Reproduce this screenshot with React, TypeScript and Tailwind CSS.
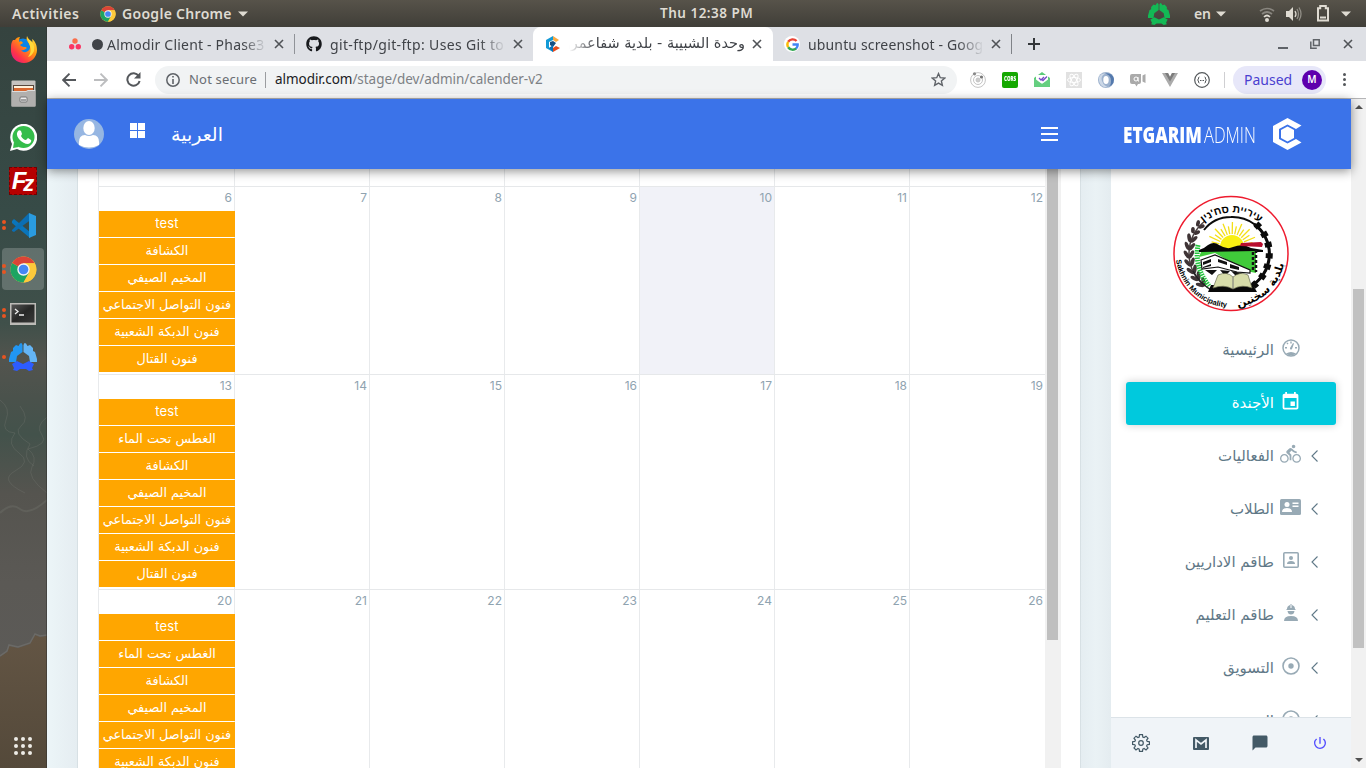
import React from "react";
import { FaGithub } from "react-icons/fa";
import { MdEvent, MdDirectionsBike, MdPowerSettingsNew, MdChatBubble } from "react-icons/md";

const ui = "font-['Noto_Sans','Open_Sans',sans-serif]";
const ar = "font-['DejaVu_Sans',sans-serif]";

const shared = ["الكشافة", "المخيم الصيفي", "فنون التواصل الاجتماعي", "فنون الدبكة الشعبية", "فنون القتال"];
const diving = "الغطس تحت الماء";
const weeks = [
  { days: [6, 7, 8, 9, 10, 11, 12], events: ["test", ...shared], height: "h-[188px]" },
  { days: [13, 14, 15, 16, 17, 18, 19], events: ["test", diving, ...shared], height: "h-[215px]" },
  { days: [20, 21, 22, 23, 24, 25, 26], events: ["test", diving, ...shared], height: "h-[215px]" },
];

function ChromeLogo({ size }: { size: number }) {
  return (
    <svg width={size} height={size} viewBox="0 0 48 48">
      <circle cx="24" cy="24" r="23" fill="#fdc93b" />
      <path d="M24 24 4 12.5A23 23 0 0 0 24 47L34 30z" fill="#1da462" />
      <path d="M24 24 4 12.5A23 23 0 0 1 44 13H24z" fill="#db4437" />
      <path d="M24 13h20a23 23 0 0 1-20 34l10-18z" fill="#fdc93b" />
      <circle cx="24" cy="24" r="11" fill="#f4f4f4" />
      <circle cx="24" cy="24" r="8.6" fill="#4587f3" />
    </svg>
  );
}

function TriRing({ size, colors }: { size: number; colors: string[] }) {
  return (
    <svg width={size} height={size} viewBox="0 0 28 28">
      <path d="M12.500 0L11 .5 9.500 3 7 2 4 5l0 3-2 1-2 7 0 3h7l1-6 5.500-4V2z" fill={colors[0]} />
      <path d="M15.500 0L17 .5 18.500 3 21 2l3 3v3l2 1 2 7v3h-7l-1-6-5.500-4V2z" fill={colors[1]} />
      <path d="M3 21l5-3 6 3 6-3 5 3-2 4 1 2-4 1-3-2h-6l-3 2-4-1 1-2z" fill={colors[2]} />
    </svg>
  );
}

function TopBar() {
  return (
    <div className={`relative flex h-[27px] w-full items-center bg-linear-to-b from-[#57534a] to-[#403e38] text-[14px] font-semibold text-[#dfdbd2] ${ui}`}>
      <span className="ml-3 w-[88px] whitespace-nowrap text-[14px] tracking-[0.5px]">Activities</span>
      <ChromeLogo size={16} />
      <span className="ml-[6px] w-[116px] whitespace-nowrap tracking-[0.3px]">Google Chrome</span>
      <Caret />
      <span className="absolute left-[660px] whitespace-nowrap text-[13.5px] tracking-[0.5px]">Thu 12:38 PM</span>
      <div className="ml-auto flex h-full items-center">
        <TriRing size={22} colors={["#13b955", "#13b955", "#13b955"]} />
        <span className="ml-6 mr-[5px]">en</span>
        <Caret />
        <svg className="ml-[33px]" width="16" height="16" viewBox="0 0 16 16" fill="none" strokeWidth="1.7">
          <path d="M1 5q7-5 14 0M3 8q5-4 10 0" stroke="#89867f" />
          <path d="M5 11q3-3 6 0" stroke="#dfdbd2" />
          <circle cx="8" cy="14" r="2" fill="#dfdbd2" />
        </svg>
        <svg className="ml-[10px]" width="18" height="16" viewBox="0 0 18 16" fill="none">
          <path d="M1 5h3l4-4v14l-4-4H1z" fill="#dfdbd2" />
          <path d="M10 5q2 3 0 6" stroke="#dfdbd2" strokeWidth="1.3" />
          <path d="M12 3q3 5 0 10M14 1.500q4 6.500 0 13" stroke="#918e86" strokeWidth="1.3" />
        </svg>
        <svg className="ml-[13px]" width="14" height="17" viewBox="0 0 14 17">
          <path d="M2 3.200h2.200V1h5.600v2.200H12V15.500H2z" fill="none" stroke="#dfdbd2" strokeWidth="2" />
          <path d="M4 11.500h6v2H4z" fill="#dfdbd2" />
        </svg>
        <span className="ml-[11px] mr-[15px] flex"><Caret /></span>
      </div>
    </div>
  );
}

function Caret() {
  return (
    <svg width="10" height="6" viewBox="0 0 10 6">
      <path d="M0 .5h10L5 5.500z" fill="#dfdbd2" />
    </svg>
  );
}

function Dots({ n }: { n: number }) {
  return (
    <span className="absolute left-[2px] top-1/2 flex -translate-y-1/2 flex-col gap-[2px]">
      {Array.from({ length: n }, (_, i) => <i key={i} className="size-1 rounded-full bg-[#e95420]" />)}
    </span>
  );
}

function DockItem({ children, dots = 0, active = false }: { children: React.ReactNode; dots?: number; active?: boolean }) {
  return (
    <div className="relative flex h-[44px] w-[46px] items-center justify-center">
      {active && <span className="absolute left-[2px] top-[1px] h-[42px] w-[42px] rounded-[4px] bg-white/20" />}
      {dots > 0 && <Dots n={dots} />}
      <span className="relative flex">{children}</span>
    </div>
  );
}

function Dock() {
  return (
    <div className="relative flex w-[47px] shrink-0 flex-col overflow-hidden bg-[#34433f]">
      <svg className="absolute inset-0" width="47" height="741" viewBox="0 0 47 741">
        <defs>
          <linearGradient id="sea" x1="0" y1="0" x2="0" y2="1">
            <stop offset="0" stopColor="#35433f" />
            <stop offset=".25" stopColor="#374b47" />
            <stop offset=".4" stopColor="#40504a" />
            <stop offset=".45" stopColor="#53544e" />
            <stop offset=".5" stopColor="#4a524c" />
            <stop offset=".55" stopColor="#43524b" />
            <stop offset=".63" stopColor="#55544f" />
            <stop offset=".75" stopColor="#5b5955" />
            <stop offset="1" stopColor="#5d5c5a" />
          </linearGradient>
          <linearGradient id="sand" x1="0" y1="0" x2="0" y2="1">
            <stop offset="0" stopColor="#635544" />
            <stop offset="1" stopColor="#54493a" />
          </linearGradient>
        </defs>
        <rect width="47" height="741" fill="url(#sea)" />
        <g fill="none" stroke="#777a73" strokeOpacity=".3">
          <path d="M0 373q11 8 6 20t9 13q-9 11 4 20t-4 18 10 22M47 390q-12 9-5 18t-14 14q10 8 4 18t15 26M20 379q10 13 1 20t9 18q-9 14 4 22" />
          <path d="M0 486q11-11 20-4t27-9" strokeWidth="2" />
        </g>
        <path d="M0 630l7-5 2-6 9 2 12-4 5-9 5 2 7-1v132H0z" fill="url(#sand)" />
        <path d="M0 629l7-5 2-6 9 2 12-4 5-9 5 2 7-1" fill="none" stroke="#6b6a67" strokeWidth="1.5" />
        <path d="M46.500 0v741" stroke="#2f302d" strokeOpacity=".5" />
      </svg>
      <DockItem>
        <svg width="27" height="27" viewBox="0 0 27 27">
          <defs>
            <linearGradient id="fox" x1="1" y1="0" x2=".1" y2="1">
              <stop offset="0" stopColor="#fff44f" /><stop offset=".4" stopColor="#ff980e" /><stop offset=".75" stopColor="#ff3647" /><stop offset="1" stopColor="#e31587" />
            </linearGradient>
          </defs>
          <circle cx="13" cy="12" r="9.500" fill="#0a84e8" />
          <path d="M1 12C0 22 7 27 14 27s13-6 13-13c0-5-2-9-5-11 1 3 0 4-1 4-1-2-3-5-4-7-2 6 4 7 3 12-1 4-6 6-9 2 3 1 4-1 6-2-2-2-4 0-7-3l3-2c-1-2-3-2-4-1 0-2 0-3 1-5-2 0-4 1-5 3L3 4C1 7 1 9 1 12z" fill="url(#fox)" />
          <path d="M17 2q9 5 7 13-2 5-6 6 4-5 2-11z" fill="#ffd83a" />
        </svg>
      </DockItem>
      <DockItem>
        <svg width="25" height="27" viewBox="0 0 25 27">
          <rect x=".5" y=".5" width="24" height="26" rx="1" fill="#c6c3c0" />
          <path d="M2 5h21v8H2z" fill="#57483d" /><path d="M3 6h19v2H3z" fill="#fff1db" /><path d="M3 8h19v4H3z" fill="#d8672f" />
          <path d="M.5 11h15l2-1h7v16.500H.5z" fill="#b1b0ae" /><path d="M1 11.500h14l2-1h7" stroke="#ddd" fill="none" />
          <rect x="9" y="17" width="7" height="5" rx="1" fill="#eee" stroke="#777" /><path d="M10 20h5" stroke="#555" />
        </svg>
      </DockItem>
      <DockItem>
        <svg width="27" height="27" viewBox="0 0 27 27">
          <path d="M0 27l2-7a13.500 13.500 0 1 1 5 5z" fill="#fff" /><circle cx="13.500" cy="13" r="11" fill="#35bd4b" />
          <path d="M3 24l1-6 5 5z" fill="#35bd4b" />
          <path d="M8 7c1-1 2-1 3 0l1 3-1 2c1 2 3 4 5 4l2-2 3 2c1 1-1 4-3 4-6 0-12-7-11-11z" fill="#fff" />
        </svg>
      </DockItem>
      <DockItem>
        <span className="relative flex size-[28px] items-center justify-center border border-dashed border-[#720000] bg-[#b60000] font-['Liberation_Sans',sans-serif] text-[24px] font-bold italic tracking-[-3px] text-white">
          <span className="-ml-[3px]">F</span><span className="mt-[5px] text-[22px]">z</span>
        </span>
      </DockItem>
      <DockItem dots={2}>
        <svg width="25" height="25" viewBox="0 0 25 25">
          <path d="M1 8l2-2 16 13v6L1 10z" fill="#0a75bb" /><path d="M1 17l17-17 3 6L3 19l-2-1z" fill="#0b6eb3" />
          <path d="M18 0l7 3v19l-7 3z" fill="#2a9bdf" />
        </svg>
      </DockItem>
      <DockItem dots={2} active><ChromeLogo size={27} /></DockItem>
      <DockItem dots={2}>
        <svg className="mt-[2px]" width="26" height="22" viewBox="0 0 26 22">
          <defs><linearGradient id="term" x1="0" y1="0" x2="1" y2="1"><stop stopColor="#555" /><stop offset=".5" stopColor="#272827" /><stop offset="1" stopColor="#383938" /></linearGradient></defs>
          <rect width="26" height="22" fill="#bcbbb7" /><rect x="1.500" y="1.500" width="23" height="18" fill="url(#term)" />
          <path d="M5 6l3 2.500L5 11M9 12h5" stroke="#eee" strokeWidth="1.300" fill="none" />
        </svg>
      </DockItem>
      <DockItem dots={1}><TriRing size={28} colors={["#2196f3", "#64b5f6", "#2d5cff"]} /></DockItem>
      <div className="relative mx-auto mt-auto mb-[13px] mr-[15px] grid grid-cols-3 gap-[3px]">
        {Array.from({ length: 9 }, (_, i) => <i key={i} className="size-1 rounded-full bg-[#eeece7]" />)}
      </div>
    </div>
  );
}

function Close({ className = "" }: { className?: string }) {
  return (
    <svg className={`shrink-0 ${className}`} width="10" height="10" viewBox="0 0 10 10">
      <path d="M1 1l8 8M9 1L1 9" stroke="#505357" strokeWidth="1.600" />
    </svg>
  );
}

function GoogleG() {
  return (
    <span className="flex size-4 shrink-0 items-center justify-center rounded-full bg-white">
      <svg width="13" height="13" viewBox="0 0 24 24" fill="none" strokeWidth="4.500">
        <path d="M19.500 5.500A10 10 0 0 0 4 7" stroke="#ea4335" /><path d="M4 7a10 10 0 0 0 0 10" stroke="#fbbc05" />
        <path d="M4 17a10 10 0 0 0 15 2" stroke="#34a853" /><path d="M18.500 19.500A9 9 0 0 0 21.500 12H12" stroke="#4285f4" />
      </svg>
    </span>
  );
}

function TabStrip() {
  const fade = "overflow-hidden whitespace-nowrap mask-r-from-85% mask-r-to-100%";
  return (
    <div className={`relative flex h-[34px] items-center bg-[#dee0e5] text-[14px] text-[#404348] ${ui}`}>
      <div className="flex w-[247px] items-center">
        <svg className="ml-[22px] shrink-0" width="12" height="12" viewBox="0 0 12 12">
          <circle cx="6" cy="3" r="2.700" fill="#fa6e4b" /><circle cx="2.700" cy="8.700" r="2.700" fill="#fa3663" /><circle cx="9.300" cy="8.700" r="2.700" fill="#fa3663" />
        </svg>
        <i className="ml-[11px] size-[11px] shrink-0 rounded-full bg-[#404348]" />
        <span className={`ml-[4px] w-[160px] tracking-[0.2px] ${fade}`}>Almodir Client - Phase3</span>
        <Close className="ml-[7px]" />
      </div>
      <i className="h-5 w-px bg-[#909398]" />
      <div className="flex w-[238px] items-center">
        <FaGithub className="ml-[11px] shrink-0 text-[#17191c]" size={16} />
        <span className={`ml-2 w-[176px] tracking-[0.35px] ${fade}`}>git-ftp/git-ftp: Uses Git to</span>
        <Close className="ml-[7px]" />
      </div>
      <div className="flex h-full w-[240px] items-center rounded-t-[8px] bg-white">
        <svg className="ml-[13px] shrink-0" width="14" height="16" viewBox="0 0 14 16">
          <path d="M0 4l7-4v4L3 6v6l4-2v6l-7-4z" fill="#139ad6" /><path d="M7 0l6 4-3 2-3-2z" fill="#f9a944" />
          <path d="M7 12l3-2 4 2-7 4z" fill="#e64c1e" /><path d="M4 6l3-1 3 2-3 4-3-2z" fill="#164f83" /><path d="M3 12l4-3v7z" fill="#0a72b9" />
        </svg>
        <span dir="rtl" className={`ml-[9px] w-[176px] overflow-hidden whitespace-nowrap mask-l-from-85% mask-l-to-100% text-[14.5px] ${ar}`}>وحدة الشبيبة - بلدية شفاعمرو</span>
        <Close className="ml-[7px]" />
      </div>
      <div className="flex w-[238px] items-center">
        <span className="ml-[11px] flex"><GoogleG /></span>
        <span className={`ml-2 w-[176px] tracking-[0.15px] ${fade}`}>ubuntu screenshot - Goog</span>
        <Close className="ml-[7px]" />
      </div>
      <i className="h-5 w-px bg-[#808388]" />
      <svg className="ml-[16px]" width="12" height="12" viewBox="0 0 12 12"><path d="M6 0v12M0 6h12" stroke="#333639" strokeWidth="2" /></svg>
      <div className="ml-auto mr-[13px] flex items-center">
        <i className="mt-2 h-[2px] w-[10px] bg-[#5f6368]" />
        <svg className="ml-[22px]" width="10" height="10" viewBox="0 0 10 10" fill="none" stroke="#5f6368" strokeWidth="1.500"><path d="M3.500.8h5.700v5.700H3.500zM.8 2.500v6.700h6" /></svg>
        <Close className="ml-[23px]" />
      </div>
    </div>
  );
}

function Extensions() {
  return (
    <div className="ml-[13px] flex items-center gap-4">
      <svg width="16" height="16" viewBox="0 0 16 16" fill="none" stroke="#c4c4c4"><circle cx="8" cy="8" r="7.400" /><circle cx="8" cy="8" r="4.500" /><circle cx="8" cy="8" r="2" fill="#ccc" /><circle cx="4.500" cy="1.800" r="1.600" fill="#888" stroke="none" /><circle cx="11.500" cy="5" r="1.600" fill="#777" stroke="none" /></svg>
      <span className="flex size-4 items-center justify-center rounded-[2px] bg-[#14a800] font-['Open_Sans',sans-serif] text-[6px] font-extrabold text-white"><span className="scale-x-75 scale-y-125">CORS</span></span>
      <svg width="16" height="16" viewBox="0 0 16 16"><path d="M0 6l8-6 8 6v9H0z" fill="#5bcb78" /><path d="M2 3h12v6l-6 3-6-3z" fill="#fff" /><path d="M0 6l8 6 8-6v9H0z" fill="#65cf80" /><path d="M5 6l2 2 3-3M8 7.500l1 1 4-4" stroke="#7549c6" strokeWidth="1.300" fill="none" /></svg>
      <svg width="16" height="16" viewBox="0 0 16 16"><path d="M0 0h16v16H0z" fill="#e1e1e1" /><g fill="none" stroke="#fff"><ellipse cx="8" cy="8" rx="6.500" ry="2.500" /><ellipse cx="8" cy="8" rx="6.500" ry="2.500" transform="rotate(60 8 8)" /><ellipse cx="8" cy="8" rx="6.500" ry="2.500" transform="rotate(120 8 8)" /></g></svg>
      <svg width="16" height="16" viewBox="0 0 16 16"><circle cx="8" cy="8" r="8" fill="#9db2ce" /><path d="M5 1Q13 2 13 9T7 15q9 0 9-8-1-7-11-6z" fill="#5479ad" /><path d="M9 1Q2 3 4 9t8 6q-9 2-11-6Q0 1 9 1z" fill="#ccd8e7" /><ellipse cx="8" cy="8" rx="2.700" ry="4" fill="#fff" /></svg>
      <svg width="16" height="16" viewBox="0 0 16 16"><path d="M0 4q0-2 2-2h9v8q0 2-2 2H8l-1.500 2.500L5 12H2q-2 0-2-2zM12.500 3.500L15.500 2v9l-3-1.500z" fill="#aaa" /><circle cx="6" cy="7" r="2" fill="none" stroke="#fff" /><path d="M8 5v4h1" stroke="#fff" fill="none" /></svg>
      <svg width="16" height="16" viewBox="0 0 16 16"><path d="M0 1h6l2 4 2-4h6L8 15z" fill="#ababab" /><path d="M3 1h3l2 4 2-4h3L8 9.500z" fill="#7c7c7c" /></svg>
      <svg width="16" height="16" viewBox="0 0 16 16" fill="none" stroke="#54585b"><circle cx="8" cy="8" r="7.300" strokeWidth="1.200" /><path d="M5.500 5Q4 5 4.500 7L3.500 8l1 1Q4 11 5.500 11M10.500 5Q12 5 11.500 7l1 1-1 1q.5 2-1 2M6 8.500h1M7.500 8.500h1M9 8.500h1" /></svg>
    </div>
  );
}

function Toolbar() {
  return (
    <div className={`flex h-[38px] items-center border-b border-[#b5b5b7] bg-white text-[13px] ${ui}`}>
      <svg className="ml-[15px]" width="14" height="14" viewBox="0 0 14 14" fill="none" stroke="#54575b" strokeWidth="1.900"><path d="M14 7H1.500M7.500.7L1.200 7l6.300 6.300" /></svg>
      <svg className="ml-[18px]" width="14" height="14" viewBox="0 0 14 14" fill="none" stroke="#bcbdbf" strokeWidth="1.900"><path d="M0 7h12.500M6.500.7L12.800 7l-6.300 6.300" /></svg>
      <svg className="ml-[18px]" width="15" height="15" viewBox="0 0 15 15"><path d="M12.700 4A6.200 6.200 0 1 0 13.600 9" fill="none" stroke="#54575b" strokeWidth="2" /><path d="M14.500 0v6.500H8z" fill="#54575b" /></svg>
      <div className="ml-[14px] flex h-7 w-[802px] shrink-0 items-center rounded-full bg-[#f1f3f4] text-[#6a6e73]">
        <svg className="ml-[11px]" width="14" height="14" viewBox="0 0 14 14"><circle cx="7" cy="7" r="6.200" fill="none" stroke="#5f6368" strokeWidth="1.500" /><path d="M6.200 3h1.600v1.500H6.200zM6.200 6h1.600v5H6.200z" fill="#5f6368" /></svg>
        <span className="ml-[9px] w-[76px] whitespace-nowrap tracking-[0.2px]">Not secure</span>
        <i className="mr-[9px] h-4 w-px bg-[#9b9da0]" />
        <span className="whitespace-nowrap text-[13.500px] tracking-[-0.05px] text-[#7d8185]"><span className="text-[#202124]">almodir.com</span>/stage/dev/admin/calender-v2</span>
        <svg className="ml-auto mr-[11px]" width="15" height="15" viewBox="0 0 24 24" fill="none" stroke="#5f6368" strokeWidth="2.200"><path d="M12 2.500l2.800 6.600 7.200.6-5.400 4.700 1.600 7-6.200-3.700-6.200 3.700 1.600-7L2 9.700l7.200-.6z" /></svg>
      </div>
      <Extensions />
      <i className="ml-[14px] h-4 w-px bg-[#cfcfd2]" />
      <div className="ml-2 flex h-7 w-[93px] items-center rounded-full bg-[#e7e7f9] pl-[11px] text-[14px] text-[#4a3fd0]">
        <span className="w-[50px] whitespace-nowrap">Paused</span>
        <span className="ml-[8px] flex size-5 items-center justify-center rounded-full bg-[#5f00ad] text-[10px] font-semibold text-white">M</span>
      </div>
      <span className="ml-[17px] flex flex-col gap-[2px]"><i className="size-[3px] rounded-full bg-[#54575b]" /><i className="size-[3px] rounded-full bg-[#54575b]" /><i className="size-[3px] rounded-full bg-[#54575b]" /></span>
    </div>
  );
}

function AppHeader() {
  return (
    <header className="relative z-10 flex h-[70px] shrink-0 items-center bg-[#3b73e9] text-white shadow-[0_2px_10px_rgba(0,0,0,0.45)]">
      <svg className="ml-[27px]" width="30" height="30" viewBox="0 0 30 30"><circle cx="15" cy="15" r="15" fill="#96b6e2" /><ellipse cx="15" cy="9" rx="5.700" ry="7" fill="#fff" /><path d="M5 26q-1-10 6-10 4 2 8 0 7 0 6 10-10 5-20 0z" fill="#fff" /></svg>
      <svg className="ml-[26px] mb-2" width="15" height="15" viewBox="0 0 15 15" fill="#fff"><path d="M0 0h7v7H0zM8 0h7v7H8zM0 8h7v7H0zM8 8h7v7H8z" /></svg>
      <span dir="rtl" className={`ml-[26px] text-[19px] whitespace-nowrap ${ar}`}>العربية</span>
      <svg className="ml-auto" width="17" height="14" viewBox="0 0 17 14"><path d="M0 1h17M0 7h17M0 13h17" stroke="#fff" strokeWidth="2" /></svg>
      <div className="ml-[65px] flex w-[134px] items-baseline whitespace-nowrap font-['Open_Sans',sans-serif] text-[22px]">
        <span className="w-[81px]"><span className="inline-block origin-left scale-x-[0.78] font-extrabold">ETGARIM</span></span>
        <span className="inline-block origin-left scale-x-[0.75] font-light">ADMIN</span>
      </div>
      <svg className="ml-[16px] mr-[49px]" width="29" height="32" viewBox="0 0 29 32" fill="#fff"><path d="M14.500 0L28.500 7.500 23 11l-8.500-4.500L6 11v10l8.500 4.500L23 21l5.500 3.500L14.500 32 0 24V8z" /><path d="M14.500 8.500L21 12v8l-6.500 3.500L8 20v-8z" /></svg>
    </header>
  );
}

function Calendar() {
  return (
    <div className="flex w-[1004px] shrink-0 overflow-hidden border-x border-[#d7e0e4] bg-white pl-[20px]">
      <div className="w-[947px] shrink-0 border-l border-[#e8eaec]">
        <div className="grid h-[17px] grid-cols-[136px_135px_135px_135px_135px_135px_135px]">
          {weeks[0].days.map((d) => <div key={d} className="border-r border-[#e8eaec] last:border-r-0" />)}
        </div>
        {weeks.map((week) => (
          <div key={week.days[0]} className={`grid grid-cols-[136px_135px_135px_135px_135px_135px_135px] border-t border-[#e6e8ea] ${week.height}`}>
            {week.days.map((day, i) => (
              <div key={day} className={`border-r border-[#e8eaec] last:border-r-0 ${day === 10 ? "bg-[#f1f2f8]" : ""}`}>
                <div className="h-6 pr-[2px] pt-[1px] text-right font-['Inter',sans-serif] text-[12px] leading-[20px] text-[#8fa3b0]">{day}</div>
                {i === 0 && week.events.map((e) => (
                  <div key={e} dir="auto" className={`mb-px h-[26px] w-[136px] whitespace-nowrap bg-[#ffa600] text-center text-white ${e === "test" ? "font-['Inter',sans-serif] text-[13px] leading-[25px] tracking-[0.2px]" : "font-['DejaVu_Sans',sans-serif] text-[12.8px] leading-[25px]"}`}>{e}</div>
                ))}
              </div>
            ))}
          </div>
        ))}
      </div>
      <div className="w-[16px] shrink-0 bg-[#f1f1f1]"><div className="ml-[2px] h-[471px] w-[11px] bg-[#bfbfbf]" /></div>
    </div>
  );
}

function Seal() {
  return (
    <svg className="mx-auto mt-[26px] shrink-0" width="116" height="117" viewBox="0 0 116 117">
      <defs>
        <path id="arcTop" d="M16 60A42.500 42.500 0 0 1 101 60" />
        <path id="arcLeft" d="M3 64A55 55 0 0 0 64 112" />
        <path id="arcRight" d="M54 112A54 54 0 0 0 112 58" />
      </defs>
      <circle cx="58" cy="58.500" r="57" fill="#fff" stroke="#ee1b2e" strokeWidth="1.500" />
      <path d="M32 26A41 41 0 0 0 32 91" fill="none" stroke="#4b4242" strokeWidth="1.500" />
      <g fill="#3f3436">
        {Array.from({ length: 9 }, (_, i) => {
          const a = (226 - i * 11) * Math.PI / 180;
          const x = 58 + 42 * Math.cos(a), y = 58 - 42 * Math.sin(a);
          const r = i > 6 ? 3.2 : 4.5;
          return <g key={i} transform={`translate(${x} ${y}) rotate(${i * 11 - 46})`}><ellipse rx="1.900" ry={r} transform="translate(-2.400 0) rotate(-30)" /><ellipse rx="1.900" ry={r} transform="translate(2.400 0) rotate(30)" /></g>;
        })}
      </g>
      <path d="M31 35Q41 22 58 22A37 37 0 0 1 78 91" fill="none" stroke="#0b0b0b" strokeWidth="2" />
      <path d="M83 29A40 40 0 0 1 80 91" fill="none" stroke="#0b0b0b" strokeWidth="7" strokeDasharray="5 6" />
      <path d="M81 29A37 37 0 0 1 78 91" fill="none" stroke="#0b0b0b" strokeWidth="3" />
      <path d="M25 50Q21 72 36 91" fill="none" stroke="#22c43c" strokeWidth="5" strokeDasharray="1.500 1" />
      <path d="M20 76Q27 89 40 96" fill="none" stroke="#222" strokeWidth="1.500" />
      <g stroke="#f4df16" strokeWidth="1.300">
        {Array.from({ length: 15 }, (_, i) => {
          const a = (12 + i * 11) * Math.PI / 180;
          const out = i % 2 ? 25 : 21;
          return <path key={i} d={`M${59 + 13 * Math.cos(a)} ${52 - 13 * Math.sin(a)}L${59 + out * Math.cos(a)} ${52 - out * Math.sin(a)}`} />;
        })}
      </g>
      <circle cx="59" cy="52" r="12" fill="#f8ef12" />
      <path d="M26 55q6-2 9-5 6-4 11 0 8 5 14 2 10-4 18 1l12 2v2L26 57z" fill="#070707" />
      <path d="M68 48l20-1 2 2-1 3-22-1z" fill="#b80d2e" />
      <path d="M28 57l55-1v22l-10-2-31-18-16 4z" fill="#40ca3a" />
      <path d="M28 65l14-5 35 15v3l-13-1-19-5-16 2z" fill="#fff" stroke="#111" strokeWidth="1.200" />
      <path d="M30 67l8-3v3l-8 3zM30 72l8-3v2l-8 2zM45 64l9 3v3l-9-3zM57 69l9 3v3l-9-2zM32 75h12l-5 5zM47 75l10 1-5 5zM58 76l11 2-4 5z" fill="#111" />
      <path d="M83 55v22M80 57v19" stroke="#111" strokeWidth="2.500" strokeDasharray="3 2" />
      <path d="M38 90h42l4 7H35z" fill="#090909" />
      <path d="M45 80q9-4 15 2 7-6 15-2l4 13q-10-4-19 1-9-5-20-1z" fill="#d8ddaa" stroke="#686b50" strokeWidth=".7" /><path d="M60 82v12" stroke="#777" />
      <text className="font-['Liberation_Sans',sans-serif] text-[10.5px] font-bold" direction="rtl" textAnchor="middle"><textPath href="#arcTop" startOffset="50%">עיריית סח'נין</textPath></text>
      <text className="font-['Liberation_Sans',sans-serif] text-[7.500px] font-bold"><textPath href="#arcLeft" startOffset="1">Sakhnin Municipality</textPath></text>
      <text className="font-['DejaVu_Sans',sans-serif] text-[11px] font-bold" direction="rtl" textAnchor="middle"><textPath href="#arcRight" startOffset="50%">بلدية سخنين</textPath></text>
    </svg>
  );
}

const ring = (
  <svg width="18" height="18" viewBox="0 0 18 18"><circle cx="9" cy="9" r="8" fill="none" stroke="currentColor" strokeWidth="1.600" /><circle cx="9" cy="9" r="2.700" fill="currentColor" /></svg>
);

const menu: { label: string; icon: React.ReactNode; arrow?: boolean; active?: boolean }[] = [
  { label: "الرئيسية", icon: <svg width="18" height="18" viewBox="0 0 18 18"><circle cx="9" cy="9" r="8" fill="none" stroke="currentColor" strokeWidth="1.500" /><path d="M4 14.500q5-3 10 0-5 4-10 0zM8 9l3-5 1 .5-2 5.500q-1 1-2 0zM3 8h2v1.500H3zM13 8h2v1.500h-2zM4.500 4.500l1 1 1-1-1-1zM8.300 2.500h1.400v2H8.300z" fill="currentColor" /></svg> },
  { label: "الأجندة", icon: <MdEvent size={21} />, active: true },
  { label: "الفعاليات", icon: <MdDirectionsBike size={22} />, arrow: true },
  { label: "الطلاب", icon: <svg width="21" height="16" viewBox="0 0 21 16"><rect width="21" height="16" rx="1.500" fill="currentColor" /><circle cx="7" cy="5.500" r="2.500" fill="#fff" /><path d="M2 13q0-4 5-4t5 4zM12.500 3.500h6V5h-6zM12.500 6.500h6V8h-6z" fill="#fff" /></svg>, arrow: true },
  { label: "طاقم الاداريين", icon: <svg width="16" height="16" viewBox="0 0 16 16"><rect x=".8" y=".8" width="14.400" height="14.400" rx="1" fill="none" stroke="currentColor" strokeWidth="1.600" /><circle cx="8" cy="6" r="2" fill="currentColor" /><path d="M4 12q0-3 4-3t4 3z" fill="currentColor" /></svg>, arrow: true },
  { label: "طاقم التعليم", icon: <svg width="16" height="18" viewBox="0 0 16 18" fill="currentColor"><path d="M4 5q0-3 3-4v3h.5V0h1v4H9V1q3 1 3 4h.5v1h-9V5zM4.500 7h7q-.5 3.500-3.500 3.500T4.500 7zM1 17q0-5 7-5t7 5z" /></svg>, arrow: true },
  { label: "التسويق", icon: ring, arrow: true },
  { label: "البريد", icon: ring, arrow: true },
];

function Sidebar() {
  return (
    <aside className="flex w-[240px] shrink-0 flex-col overflow-hidden bg-white">
      <Seal />
      <nav dir="rtl" className={`flex h-[406px] flex-col gap-[10px] overflow-hidden px-[15px] pt-[17px] text-[15px] text-[#5f7887] ${ar}`}>
        {menu.map((m) => (
          <div key={m.label} className={`flex h-[43px] shrink-0 items-center rounded-[3px] pr-[18px] ${m.active ? "bg-[#00c9dd] text-white shadow-[0_0_8px_rgba(0,0,0,0.2)]" : ""}`}>
            <span className="flex w-[10px]">
              {m.arrow && <svg className="mb-[2px]" width="7" height="12" viewBox="0 0 7 12"><path d="M6.500.5L1 6l5.500 5.500" fill="none" stroke="currentColor" strokeWidth="1.100" /></svg>}
            </span>
            <span className={`mb-[5px] mr-[7px] flex w-[21px] justify-center ${m.active ? "text-white" : "text-[#98aab5]"}`}>{m.icon}</span>
            <span className="mr-[6px] whitespace-nowrap">{m.label}</span>
          </div>
        ))}
      </nav>
      <div className="mt-auto flex h-[51px] shrink-0 items-center justify-around border-t border-[#dce3e8] bg-[#f0f4f8] pr-[2px] text-[#435966]">
        <svg width="18" height="18" viewBox="0 0 18 18" fill="none" stroke="currentColor" strokeWidth="1.200"><path d="M7.500.7h3l.3 2.300 1.300.6 1.900-1.400 2 2-1.400 1.900.6 1.300 2.200.3v2.700l-2.200.3-.6 1.300 1.400 1.900-2 2-1.900-1.400-1.300.6-.3 2.200h-3l-.3-2.200-1.300-.6L4 15.900l-2-2L3.400 12l-.6-1.300-2.200-.3V7.700l2.200-.3.6-1.300L2 4.200l2-2 1.900 1.400L7.200 3z" /><circle cx="9" cy="9" r="2.300" /></svg>
        <svg width="16" height="13" viewBox="0 0 16 13"><rect width="16" height="13" rx="1" fill="currentColor" /><path d="M3 11V3l5 4 5-4v8" stroke="#f0f4f8" strokeWidth="1.700" fill="none" /></svg>
        <MdChatBubble size={18} />
        <MdPowerSettingsNew size={16} className="text-[#514bff]" />
      </div>
    </aside>
  );
}

export default function App() {
  return (
    <div className="flex h-[768px] w-[1366px] flex-col overflow-hidden">
      <TopBar />
      <div className="flex h-[741px]">
        <Dock />
        <div className="flex w-[1319px] flex-col">
          <TabStrip />
          <Toolbar />
          <div className="flex h-[669px]">
            <div className="flex w-[1304px] flex-col">
              <AppHeader />
              <div className="flex h-[599px] overflow-hidden">
                <div className="w-[30px] shrink-0 bg-linear-to-r from-[#ecf5f8] to-[#e5edf1]" />
                <Calendar />
                <div className="w-[30px] shrink-0 bg-linear-to-r from-[#e5edf1] via-[#eaf2f5] to-[#e4ecf0]" />
                <Sidebar />
              </div>
            </div>
            <div className="flex w-[15px] flex-col items-center bg-[#f1f1f1] py-[6px]">
              <svg width="8" height="4" viewBox="0 0 8 4"><path d="M0 4h8L4 0z" fill="#505050" /></svg>
              <div className="mt-[180px] h-[359px] w-[11px] bg-[#c1c1c1]" />
              <svg className="mt-auto" width="8" height="4" viewBox="0 0 8 4"><path d="M0 0h8L4 4z" fill="#505050" /></svg>
            </div>
          </div>
        </div>
      </div>
    </div>
  );
}
